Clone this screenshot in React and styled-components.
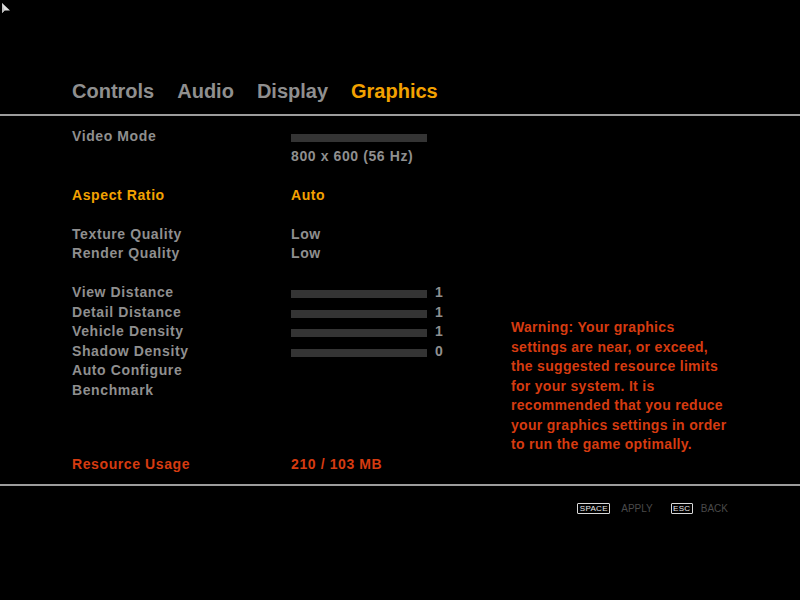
import React from "react";
import styled, { createGlobalStyle } from "styled-components";

const GlobalStyle = createGlobalStyle`
  html, body {
    margin: 0;
    padding: 0;
    background: #000;
  }
`;

const GRAY = "#8f8f8f";
const ORANGE = "#f3a200";
const RED = "#d63b10";

const tones = { gray: GRAY, orange: ORANGE, red: RED };

const tabs = ["Controls", "Audio", "Display", "Graphics"];

const rows = [
  { label: "Video Mode", bar: true },
  { value: "800 x 600 (56 Hz)" },
  {},
  { label: "Aspect Ratio", value: "Auto", tone: "orange" },
  {},
  { label: "Texture Quality", value: "Low" },
  { label: "Render Quality", value: "Low" },
  {},
  { label: "View Distance", bar: true, level: "1" },
  { label: "Detail Distance", bar: true, level: "1" },
  { label: "Vehicle Density", bar: true, level: "1" },
  { label: "Shadow Density", bar: true, level: "0" },
  { label: "Auto Configure" },
  { label: "Benchmark" },
];

const warning = [
  "Warning: Your graphics",
  "settings are near, or exceed,",
  "the suggested resource limits",
  "for your system. It is",
  "recommended that you reduce",
  "your graphics settings in order",
  "to run the game optimally.",
];

export default function App() {
  return (
    <>
      <GlobalStyle />
      <Screen>
        <Cursor width="10" height="12" viewBox="0 0 10 12">
          <polygon points="0,0 0,10 2.6,7.6 8,7.6" fill="#e0e0e0" />
          <polygon points="0,0 0,10 2.6,7.6" fill="#bdbdbd" />
        </Cursor>

        <TabBar>
          {tabs.map((t) => (
            <Tab key={t} $active={t === "Graphics"}>
              {t}
            </Tab>
          ))}
        </TabBar>

        <Body>
          <SettingsList>
            {rows.map((r, i) => (
              <Row key={i} $tone={r.tone}>
                <Label>{r.label}</Label>
                <Value>
                  {r.bar && <Bar />}
                  {r.level && <Level>{r.level}</Level>}
                  {r.value}
                </Value>
              </Row>
            ))}
          </SettingsList>
          <Warning>
            {warning.map((line) => (
              <WarningLine key={line}>{line}</WarningLine>
            ))}
          </Warning>
        </Body>

        <UsageRow $tone="red">
          <Label>Resource Usage</Label>
          <Value>210 / 103 MB</Value>
        </UsageRow>

        <Footer>
          <Hint $gap={11}>
            <KeyCap $w={33}>SPACE</KeyCap>
            APPLY
          </Hint>
          <Hint $gap={8}>
            <KeyCap $w={22}>ESC</KeyCap>
            BACK
          </Hint>
        </Footer>
      </Screen>
    </>
  );
}

const Screen = styled.div`
  position: relative;
  width: 800px;
  height: 600px;
  overflow: hidden;
  background: #000;
  font-family: "Liberation Sans", Arial, sans-serif;
  font-weight: bold;
  display: flex;
  flex-direction: column;
`;

const Cursor = styled.svg`
  position: absolute;
  left: 2px;
  top: 3px;
`;

const TabBar = styled.div`
  display: flex;
  gap: 23px;
  padding: 79px 0 11px 72px;
  border-bottom: 2px solid #9c9c9c;
`;

const Tab = styled.div`
  font-size: 20px;
  line-height: 24px;
  color: ${(p) => (p.$active ? ORANGE : GRAY)};
`;

const Body = styled.div`
  display: grid;
  grid-template-columns: 439px 1fr;
  padding: 11px 0 0 72px;
`;

const SettingsList = styled.div`
  display: flex;
  flex-direction: column;
`;

const Row = styled.div`
  display: grid;
  grid-template-columns: 219px 1fr;
  height: 19.5px;
  line-height: 19.5px;
  font-size: 14px;
  letter-spacing: 0.6px;
  color: ${(p) => tones[p.$tone] || GRAY};
`;

const UsageRow = styled(Row)`
  padding-left: 72px;
  margin-bottom: 10px;
`;

const Label = styled.div`
  white-space: nowrap;
`;

const Value = styled.div`
  display: flex;
  align-items: center;
  white-space: nowrap;
`;

const Bar = styled.div`
  width: 136px;
  height: 8px;
  margin-top: 2.5px;
  background: #343434;
`;

const Level = styled.span`
  margin-left: 8px;
`;

const Warning = styled.div`
  padding-top: 191px;
  font-size: 14px;
  line-height: 19.5px;
  letter-spacing: 0.3px;
  color: ${RED};
`;

const WarningLine = styled.div`
  white-space: nowrap;
`;

const Footer = styled.div`
  display: flex;
  justify-content: flex-end;
  gap: 18px;
  padding: 17px 72px 0 0;
  border-top: 2px solid #9c9c9c;
`;

const Hint = styled.div`
  display: flex;
  align-items: center;
  gap: ${(p) => p.$gap}px;
  font-size: 10px;
  font-weight: normal;
  line-height: 11px;
  color: #4a4a4a;
`;

const KeyCap = styled.span`
  box-sizing: border-box;
  width: ${(p) => p.$w}px;
  height: 11px;
  border: 1px solid #d8d8d8;
  border-radius: 1px;
  font-size: 8px;
  line-height: 9px;
  text-align: center;
  color: #e8e8e8;
  letter-spacing: 0.3px;
`;
